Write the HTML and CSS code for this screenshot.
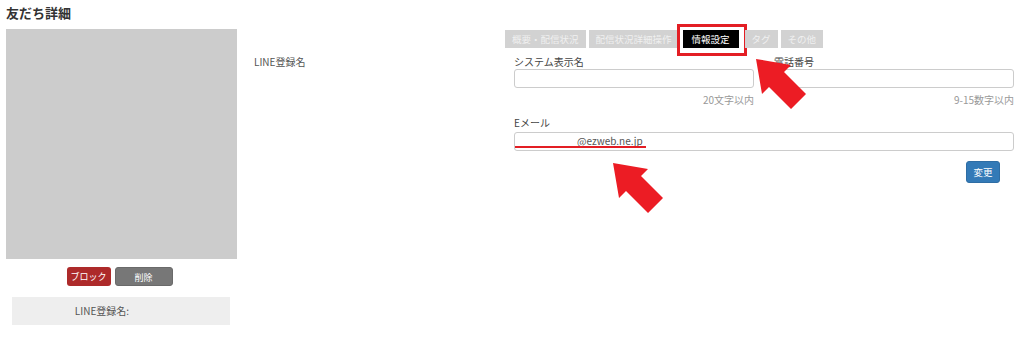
FILE: index.html
```html
<!DOCTYPE html>
<html lang="ja">
<head>
  <meta charset="UTF-8" />
  <meta name="viewport" content="width=device-width, initial-scale=1.0"/>
  <title>友だち詳細</title>
  <link rel="stylesheet" href="styles.css">
</head>
<body>

  <h1 class="page-title">友だち詳細</h1>

  <div class="detail">
    <!-- left: profile picture and actions -->
    <div class="profile">
      <div class="avatar"></div>
      <div class="actions">
        <button class="btn btn-block">ブロック</button>
        <button class="btn btn-delete">削除</button>
      </div>
      <div class="name-box">LINE登録名:</div>
    </div>

    <div class="name-label">LINE登録名</div>

    <!-- right: tabs and info form -->
    <div class="info">
      <div class="tabs">
        <a class="tab">概要・配信状況</a>
        <a class="tab">配信状況詳細操作</a>
        <a class="tab active">情報設定<span class="mark-box"></span></a>
        <a class="tab">タグ</a>
        <a class="tab">その他</a>
      </div>

      <form class="info-form">
        <div class="row">
          <div class="field">
            <label>システム表示名</label>
            <input type="text" />
            <div class="hint">20文字以内</div>
          </div>
          <div class="field">
            <label>電話番号</label>
            <input type="text" />
            <div class="hint">9-15数字以内</div>
          </div>
        </div>
        <div class="field">
          <label>Eメール</label>
          <div class="mail-wrap">
            <input type="text" class="mail" value="@ezweb.ne.jp" />
            <span class="mark-line"></span>
          </div>
        </div>
        <div class="submit-row">
          <button type="button" class="btn btn-primary">変更</button>
        </div>
      </form>
    </div>
  </div>

  <!-- annotation arrows -->
  <svg class="arrows" width="1024" height="340" viewBox="0 0 1024 340">
    <polygon points="756,59 791,65 784,72 806,94 791,109 769,87 762,94" />
    <polygon points="613,163 648,169 641,176 663,198 648,213 626,191 619,198" />
  </svg>

</body>
</html>
```

FILE: styles.css
```css
body {
  font-family: "Noto Sans CJK JP", "Noto Sans", sans-serif;
  color: #555;
  background-color: #fff;
  margin: 0;
  padding: 0;
  position: relative;
  height: 340px;
  overflow: hidden;
}

.page-title {
  font-size: 13px;
  font-weight: bold;
  color: #333;
  margin: 0;
  padding: 3px 6px 0;
  line-height: 20px;
  height: 26px;
}

.detail {
  display: flex;
  padding: 0 10px 0 6px;
}

/* left column */
.profile {
  width: 231px;
  flex-shrink: 0;
}
.avatar {
  height: 230px;
  background-color: #cccccc;
}
.actions {
  display: flex;
  justify-content: center;
  gap: 4px;
  margin-top: 8px;
  padding-right: 4px;
}
.btn {
  font-family: inherit;
  font-size: 9px;
  color: #fff;
  border: none;
  border-radius: 3px;
  height: 19px;
  padding: 0;
  line-height: 19px;
  cursor: pointer;
}
.btn-block {
  width: 44px;
  background-color: #ad2a2a;
}
.btn-delete {
  width: 58px;
  background-color: #777;
  border: 1px solid #6a6a6a;
}
.name-box {
  margin: 11px 7px 0 6px;
  height: 28px;
  line-height: 28px;
  background-color: #eee;
  font-size: 10px;
  text-align: center;
  padding-right: 38px;
}

.name-label {
  width: 251px;
  flex-shrink: 0;
  margin-left: 17px;
  padding-top: 26px;
  font-size: 10px;
  line-height: 14px;
}

/* right column */
.info {
  flex: 1;
}
.tabs {
  display: flex;
  gap: 3px;
  margin-top: 1px;
}
.tab {
  position: relative;
  height: 18px;
  line-height: 18px;
  padding: 0 7px;
  font-size: 9.5px;
  color: #f0f0f0;
  background-color: #d2d2d2;
}
.tab.active {
  background-color: #000;
  color: #fff;
  margin: 0 3px 0 1px;
  padding: 0 9px;
}
.mark-box {
  position: absolute;
  left: -6px;
  top: -6px;
  right: -8px;
  bottom: -8px;
  border: 3px solid #e31e24;
}

.info-form {
  padding-left: 9px;
  margin-top: 7px;
}
.row {
  display: flex;
  gap: 20px;
}
.row .field {
  flex: 1;
}
.field label {
  display: block;
  font-size: 10px;
  line-height: 14px;
  color: #444;
}
.field input {
  display: block;
  box-sizing: border-box;
  width: 100%;
  height: 19px;
  border: 1px solid #ccc;
  border-radius: 3px;
  font-family: inherit;
  font-size: 10px;
  color: #555;
  margin: 0;
}
.hint {
  font-size: 10px;
  line-height: 14px;
  color: #999;
  text-align: right;
  margin-top: 5px;
}
.row + .field {
  margin-top: 9px;
}
.row + .field label {
  margin-bottom: 2px;
}
.mail-wrap {
  position: relative;
}
.field input.mail {
  padding: 0 0 2px 62px;
}
.mark-line {
  position: absolute;
  left: 1px;
  top: 14px;
  width: 131px;
  height: 2px;
  background-color: #e31e24;
}

.submit-row {
  display: flex;
  justify-content: flex-end;
  padding-right: 14px;
  margin-top: 10px;
}
.btn-primary {
  width: 34px;
  height: 22px;
  font-size: 9.5px;
  background-color: #337ab7;
  border: 1px solid #2e6da4;
}

.arrows {
  position: absolute;
  left: 0;
  top: 0;
  pointer-events: none;
}
.arrows polygon {
  fill: #ec1c24;
}
```
